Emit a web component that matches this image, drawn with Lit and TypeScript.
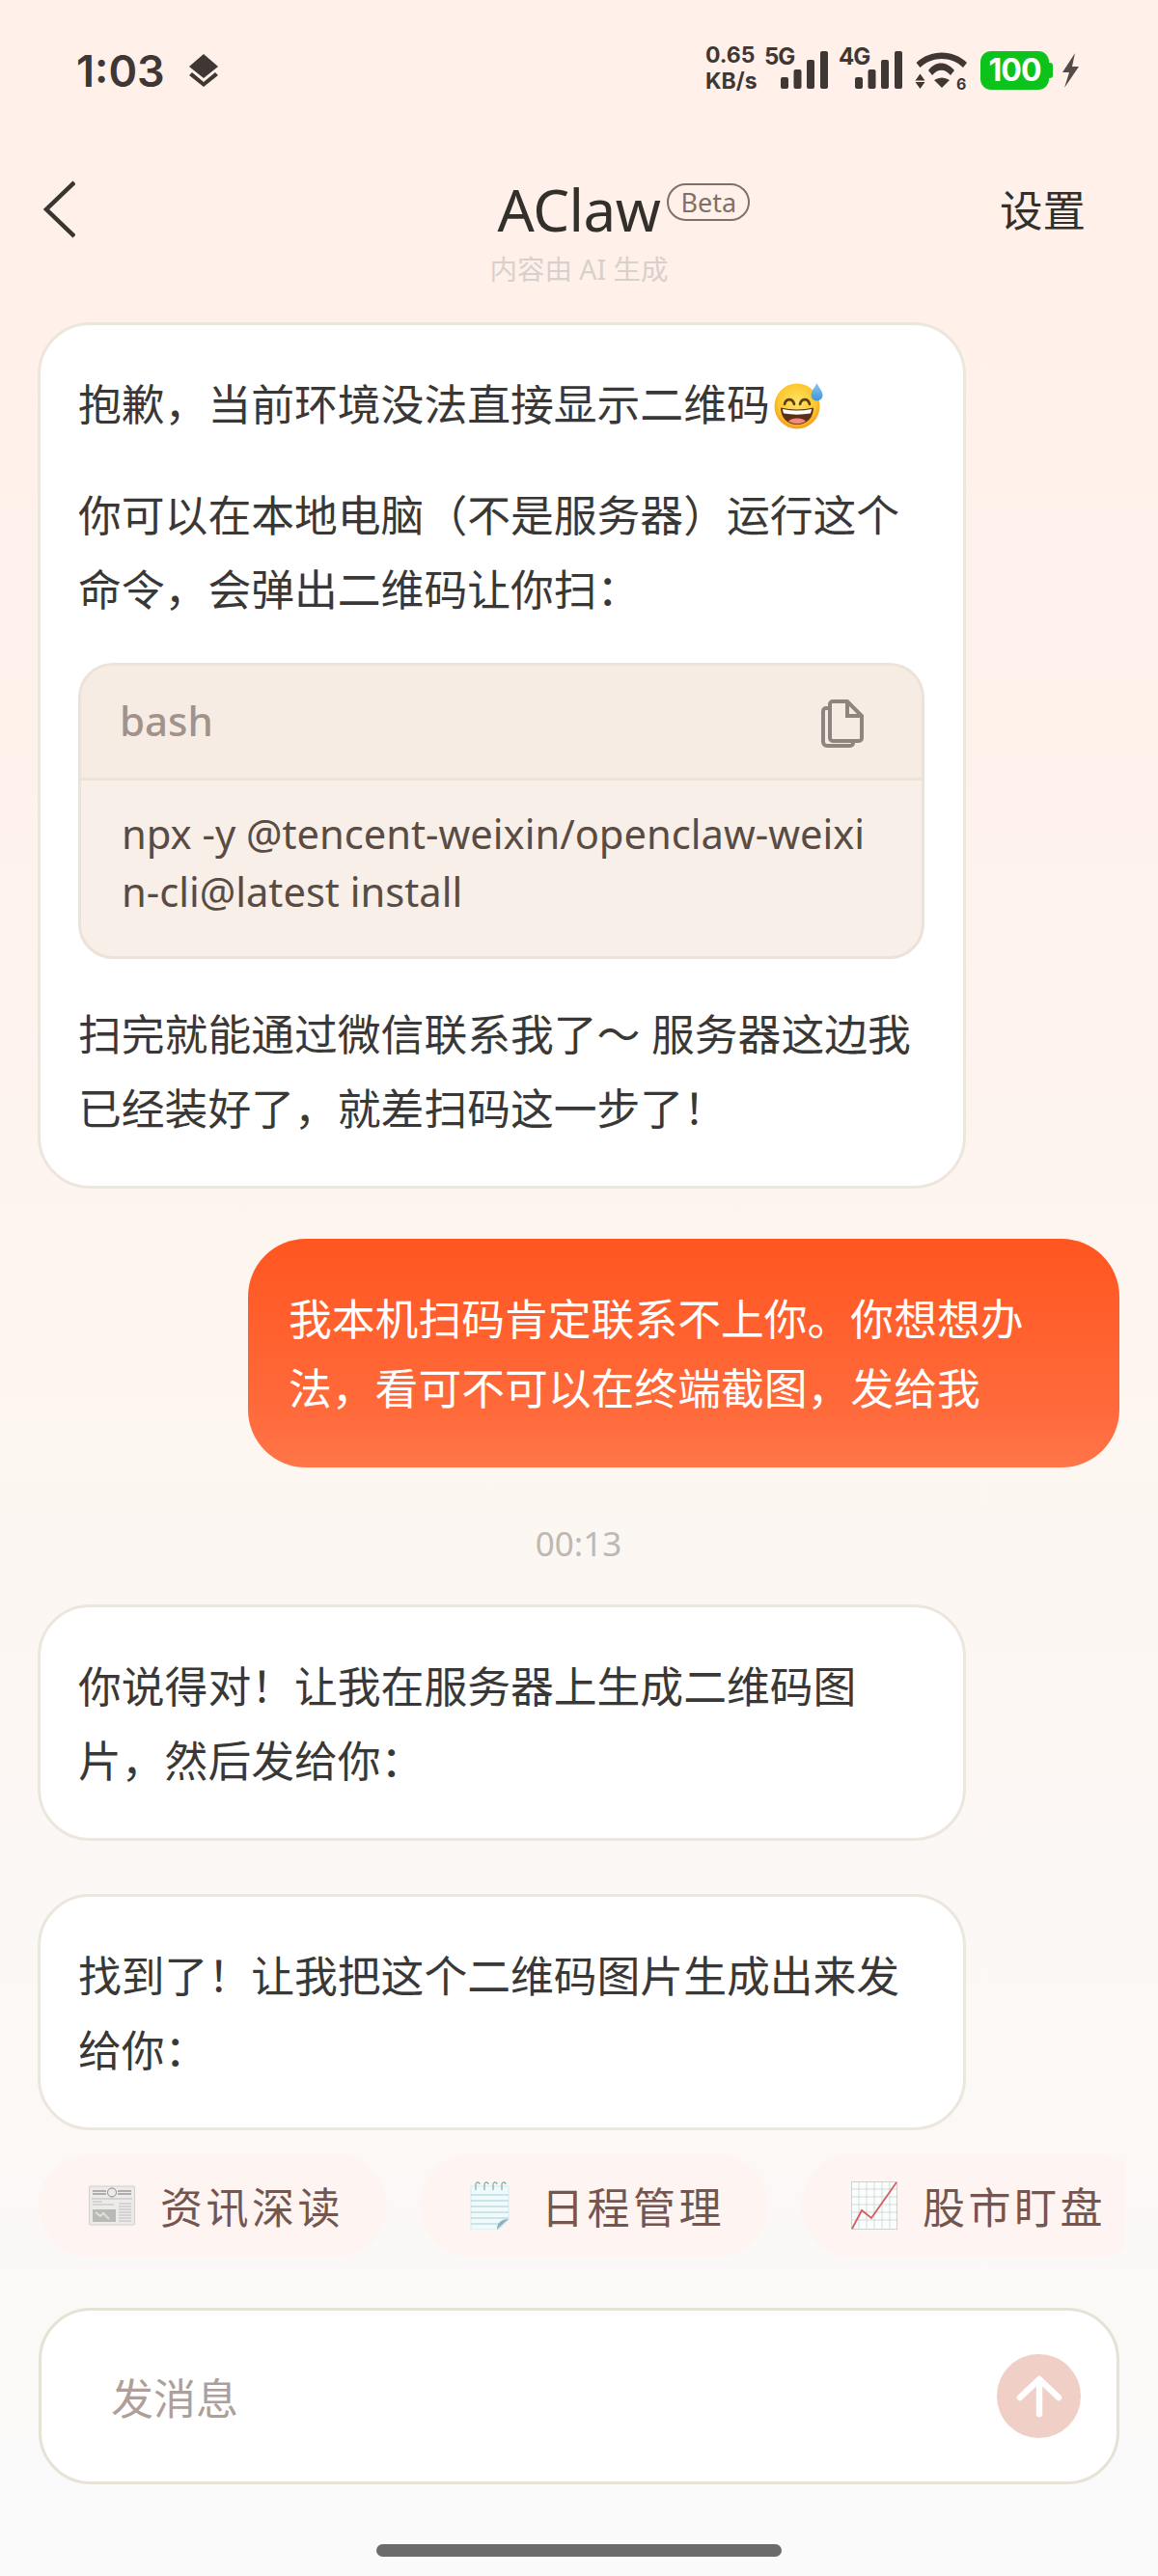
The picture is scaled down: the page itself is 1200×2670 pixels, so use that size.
import {LitElement, html, css, svg} from 'lit';
import {customElement} from 'lit/decorators.js';

const sweatEmoji = html`<svg class="emoji" viewBox="0 0 56 48">
    <defs>
        <radialGradient id="face" cx="50%" cy="42%" r="58%">
            <stop offset="0" stop-color="#fde467"/>
            <stop offset="0.72" stop-color="#fcc72e"/>
            <stop offset="1" stop-color="#f29b1d"/>
        </radialGradient>
        <linearGradient id="drop" x1="0" y1="0" x2="0" y2="1">
            <stop offset="0" stop-color="#8cc8ee"/>
            <stop offset="1" stop-color="#3e93de"/>
        </linearGradient>
    </defs>
    <circle cx="28" cy="24" r="23.500" fill="url(#face)"/>
    <path d="M15 22c1.500-6.500 8.500-6.500 10 0" fill="none" stroke="#5c3d1c" stroke-width="2.600" stroke-linecap="round"/>
    <path d="M31 22c1.500-6.500 8.500-6.500 10 0" fill="none" stroke="#5c3d1c" stroke-width="2.600" stroke-linecap="round"/>
    <path d="M11 25.500c11 2.500 23 2.500 34 0C45 36 38 43 28 43S11 36 11 25.500z" fill="#5d2f14"/>
    <path d="M13 27c10 2 20 2 30 0-.2 2-.6 3.300-1.200 4.500-9 1.500-18.600 1.500-27.600 0-.6-1.200-1-2.500-1.200-4.500z" fill="#fff"/>
    <path d="M19 39.500c4-4 14-4 18 0-5 3.500-13 3.500-18 0z" fill="#ef8a83"/>
    <path d="M48.500 0c2.500 5.500 6 8.500 6 12.500a6 6 0 0 1-12 0c0-4 3.500-7 6-12.500z" fill="url(#drop)"/>
</svg>`;

const newspaperEmoji = html`<svg class="chip-icon" viewBox="0 0 48 50">
    <rect x="0.500" y="5" width="47" height="40" rx="1" fill="#ecebe9" stroke="#d0cfcc"/>
    <path d="M4 10h14M4 13h14M30 10h14M30 13h14" stroke="#9a9a98" stroke-width="1.500"/>
    <circle cx="24" cy="11.500" r="4.500" fill="none" stroke="#8a8a88" stroke-width="1"/>
    <path d="M3 18h42M4 21h10M31 23h13M4 24h22M31 26h13M31 29h13M31 32h13M31 35h13M31 38h13M31 41h13" stroke="#bcbcba" stroke-width="1"/>
    <rect x="4" y="29" width="24" height="13" fill="#b9b9b6"/>
    <path d="M7 32l5 4 3-3 6 6" stroke="#dfdfdd" stroke-width="2" fill="none"/>
</svg>`;

const notepadEmoji = html`<svg class="chip-icon" viewBox="0 0 48 50">
    <path d="M1 5h39v35l-10 10H1z" fill="#f0fafb" stroke="#d3ecf0"/>
    <path d="M1 14h39M1 20h39M1 26h39M1 32h39M1 38h39M1 44h29" stroke="#a6cdd8" stroke-width="1.200"/>
    <path d="M28 50c0-7 4-11 12-11z" fill="#8ab5bf"/>
    <path d="M6 9V3a2 2 0 0 1 4 0M15 9V3a2 2 0 0 1 4 0M24 9V3a2 2 0 0 1 4 0M33 9V3a2 2 0 0 1 4 0" fill="none" stroke="#84b2b8" stroke-width="1.300"/>
</svg>`;

const gridLines = [8, 16, 24, 32, 40].map(
    (p) => svg`<path d="M${p} 1V49M1 ${p}H48" stroke="#c9d3d6" stroke-width="0.800"/>`
);

const chartEmoji = html`<svg class="chip-icon" viewBox="0 0 48 50">
    <rect x="0.500" y="0.500" width="47" height="49" fill="#fbfcfc" stroke="#c9d3d6"/>
    ${gridLines}
    <path d="M1 49l10-19 10 8L47 1" fill="none" stroke="#d2605f" stroke-width="1.800"/>
</svg>`;

const chips = [
    {label: '资讯深读', icon: newspaperEmoji},
    {label: '日程管理', icon: notepadEmoji},
    {label: '股市盯盘', icon: chartEmoji},
];

@customElement('app-root')
export class AppRoot extends LitElement {
    static styles = css`
        :host {
            display: block;
            width: 1200px;
            height: 2670px;
            font-family: "Noto Sans", "Noto Sans CJK SC", sans-serif;
            color: #3b3532;
        }

        .page {
            width: 1200px;
            height: 2670px;
            display: flex;
            flex-direction: column;
            overflow: hidden;
            background: linear-gradient(180deg, #fff0e9 0%, #fff2ec 30%, #fdf6f1 55%, #fafafa 100%);
        }

        /* status bar */
        .status {
            height: 146px;
            flex: none;
            display: flex;
            align-items: center;
            justify-content: space-between;
            padding: 0 81px 0 79px;
            color: #3f3733;
        }

        .status-left {
            display: flex;
            align-items: center;
            gap: 25px;
        }

        .time {
            font-family: "Inter", sans-serif;
            font-size: 45px;
            font-weight: 600;
            line-height: 1;
        }

        .status-right {
            display: flex;
            align-items: center;
            gap: 8px;
            margin-top: -4px;
        }

        .speed {
            font-family: "Inter", sans-serif;
            font-size: 23px;
            font-weight: 700;
            line-height: 27px;
            width: 53px;
            white-space: nowrap;
        }

        .net {
            display: block;
            overflow: visible;
        }

        .battery {
            display: flex;
            align-items: center;
            margin: 4px 0 0 6px;
        }

        .battery-body {
            width: 71px;
            height: 40px;
            border-radius: 11px;
            background: #0cc31c;
            color: #fff;
            font-family: "Inter", sans-serif;
            font-size: 32px;
            font-weight: 700;
            line-height: 40px;
            text-align: center;
            letter-spacing: -1px;
        }

        .battery-nub {
            width: 4px;
            height: 16px;
            border-radius: 0 3px 3px 0;
            background: #0cc31c;
        }

        .bolt {
            margin-top: 4px;
        }

        /* header */
        .header {
            flex: none;
            height: 188px;
            display: grid;
            grid-template-columns: 1fr auto 1fr;
            padding: 36px 75px 0;
            box-sizing: border-box;
        }

        .back {
            width: 34px;
            height: 60px;
            margin: 5px 0 0 -31px;
        }

        .title-block {
            display: flex;
            flex-direction: column;
            align-items: center;
        }

        .title-row {
            position: relative;
            height: 68px;
        }

        .title {
            display: block;
            font-size: 60px;
            line-height: 70px;
            color: #33302c;
            letter-spacing: -0.500px;
        }

        .beta {
            position: absolute;
            left: 100%;
            top: 8px;
            margin-left: 7px;
            border: 2.500px solid #7d726b;
            border-radius: 20px;
            font-size: 27px;
            line-height: 35px;
            padding: 0 12px;
            color: #7d726b;
        }

        .ai-note {
            font-size: 28.500px;
            line-height: 38px;
            color: #d8d0cb;
            margin-top: 10px;
        }

        .settings {
            justify-self: end;
            font-size: 44.500px;
            line-height: 72px;
            color: #33302c;
        }

        /* messages */
        .messages {
            flex: none;
            display: flex;
            flex-direction: column;
            padding: 0 40px 0 39px;
        }

        .bubble {
            width: 962px;
            box-sizing: border-box;
            background: #fff;
            border: 3px solid #ece7dd;
            border-radius: 54px;
            padding: 43px 40px 42px 39px;
            font-size: 44.800px;
            line-height: 77px;
            color: #3a3836;
        }

        .bubble p {
            margin: 0;
        }

        .bubble p + p,
        .code {
            margin-top: 38px;
        }

        .code + p {
            margin-top: 39px;
        }

        .first {
            padding-bottom: 42px;
        }

        .emoji {
            width: 56px;
            height: 48px;
            vertical-align: -9px;
        }

        .code {
            border: 3px solid #ece3d8;
            border-radius: 36px;
            background: #f7efe8;
            color: #5a4b43;
            overflow: hidden;
        }

        .code-head {
            height: 116px;
            display: flex;
            align-items: center;
            justify-content: space-between;
            padding: 0 60px 0 40px;
            border-bottom: 3px solid #ebe3d9;
            background: #f6ece3;
            color: #a1938b;
            font-size: 42px;
            font-weight: 500;
        }

        .code-head span {
            margin-bottom: 3px;
        }

        .code-head svg {
            margin-top: 3px;
        }

        .code-body {
            padding: 25px 52px 37px 42px;
            font-size: 41.700px;
            line-height: 60px;
            word-break: break-all;
        }

        .user-bubble {
            align-self: flex-end;
            width: 903px;
            box-sizing: border-box;
            margin: 52px 0 0 0;
            padding: 47px 42px 46px;
            border-radius: 60px;
            background: linear-gradient(180deg, #ff5620 0%, #ff6a3b 75%, #ff7549 100%);
            color: #fff;
            font-size: 44.800px;
            line-height: 72px;
        }

        .stamp {
            margin-top: 56px;
            text-align: center;
            font-size: 35px;
            line-height: 46px;
            color: #bfb8b2;
        }

        .gap-top {
            margin-top: 40px;
        }

        .next {
            margin-top: 55px;
        }

        /* suggestion chips */
        .chips {
            flex: none;
            display: flex;
            gap: 34px;
            margin: 24px 34px 0 40px;
            overflow: hidden;
        }

        .chip {
            flex: none;
            display: flex;
            align-items: center;
            gap: 26px;
            height: 108px;
            padding: 0 45px 0 52px;
            border-radius: 54px;
            background: #fef5f2;
            color: #755550;
            font-size: 44px;
            letter-spacing: 3.500px;
            white-space: nowrap;
        }

        .chip-icon {
            height: 50px;
            width: 48px;
        }

        /* composer */
        .composer {
            flex: none;
            margin: auto 40px 0;
            height: 183px;
            box-sizing: border-box;
            border: 3px solid #e6e2d6;
            border-radius: 54px;
            background: #fff;
            display: flex;
            align-items: center;
            justify-content: space-between;
            padding: 0 37px 0 72px;
            font-size: 44px;
            color: #ae9f9a;
        }

        .send {
            width: 87px;
            height: 87px;
            border-radius: 50%;
            background: #efcfc6;
            display: flex;
            align-items: center;
            justify-content: center;
        }

        .home {
            flex: none;
            display: flex;
            justify-content: center;
            padding: 62px 0 20px;
        }

        .home-bar {
            width: 420px;
            height: 13px;
            border-radius: 7px;
            background: #6b6b6b;
        }
    `;

    render() {
        return html`
            <div class="page">
                ${this._renderStatus()}
                <div class="header">
                    <svg class="back" viewBox="0 0 34 60">
                        <path d="M33 2L4 30l29 28" fill="none" stroke="#3a3531" stroke-width="4.500"/>
                    </svg>
                    <div class="title-block">
                        <div class="title-row">
                            <span class="title">AClaw</span>
                            <span class="beta">Beta</span>
                        </div>
                        <div class="ai-note">内容由 AI 生成</div>
                    </div>
                    <div class="settings">设置</div>
                </div>
                <div class="messages">
                    <div class="bubble first">
                        <p>抱歉，当前环境没法直接显示二维码${sweatEmoji}</p>
                        <p>你可以在本地电脑（不是服务器）运行这个命令，会弹出二维码让你扫：</p>
                        <div class="code">
                            <div class="code-head">
                                <span>bash</span>
                                <svg width="44" height="50" viewBox="0 0 44 50" fill="none" stroke="#8f8580" stroke-width="4">
                                    <path d="M9 5a3 3 0 0 1 3-3h15l15 15v23a3 3 0 0 1-3 3H12a3 3 0 0 1-3-3z"/>
                                    <path d="M27 2v15h15"/>
                                    <path d="M9 9H5a3 3 0 0 0-3 3v32a4 4 0 0 0 4 4h24a3 3 0 0 0 3-3v-2"/>
                                </svg>
                            </div>
                            <div class="code-body">npx -y @tencent-weixin/openclaw-weixin-cli@latest install</div>
                        </div>
                        <p>扫完就能通过微信联系我了～ 服务器这边我已经装好了，就差扫码这一步了！</p>
                    </div>
                    <div class="user-bubble">我本机扫码肯定联系不上你。你想想办法，看可不可以在终端截图，发给我</div>
                    <div class="stamp">00:13</div>
                    <div class="bubble gap-top"><p>你说得对！让我在服务器上生成二维码图片，然后发给你：</p></div>
                    <div class="bubble next"><p>找到了！让我把这个二维码图片生成出来发给你：</p></div>
                </div>
                <div class="chips">
                    ${chips.map((c) => html`<div class="chip">${c.icon}<span>${c.label}</span></div>`)}
                </div>
                <div class="composer">
                    <span>发消息</span>
                    <div class="send">
                        <svg width="48" height="44" viewBox="0 0 48 44" fill="none" stroke="#fff" stroke-width="6.500" stroke-linecap="round" stroke-linejoin="round">
                            <path d="M24 40V5M4 23L24 4l20 19"/>
                        </svg>
                    </div>
                </div>
                <div class="home"><div class="home-bar"></div></div>
            </div>
        `;
    }

    _renderStatus() {
        return html`
            <div class="status">
                <div class="status-left">
                    <span class="time">1:03</span>
                    <svg width="30" height="34" viewBox="0 0 30 34" fill="#3f3733">
                        <path d="M15 0l15 13-15 12L0 13z"/>
                        <path d="M3 19l12 10 12-10 3 3-15 12L0 22z"/>
                    </svg>
                </div>
                <div class="status-right">
                    <div class="speed">0.65<br/>KB/s</div>
                    ${this._renderSignal('5G', 69)}
                    ${this._renderSignal('4G', 67)}
                    <svg class="net" width="58" height="46" viewBox="0 0 58 46" fill="#3f3733">
                        <path d="M5.500 17C20 3 44 3 58 17l-4 5C42 10 22 10 9.500 22z"/>
                        <path d="M18 25c7-10 19-10 27 0l-4 5c-6-7-13-7-19 0z"/>
                        <path d="M24 35q8-5 16 0l-8 8z"/>
                        <path d="M9.500 28.500l5 7h-10zM9.500 44l-5-7h10z"/>
                        <text x="47" y="45" font-size="16" font-weight="700" font-family="Inter">6</text>
                    </svg>
                    <div class="battery">
                        <div class="battery-body">100</div>
                        <div class="battery-nub"></div>
                    </div>
                    <svg class="bolt" width="20" height="36" viewBox="0 0 20 36" fill="#554c48">
                        <path d="M15 0L2 20h7L4 36l15-22h-7z"/>
                    </svg>
                </div>
            </div>
        `;
    }

    _renderSignal(label: string, width: number) {
        return html`
            <svg class="net" width=${width} height="46" viewBox="0 0 ${width} 46" fill="#3f3733">
                <text x="0" y="19" font-size="24" font-weight="700" font-family="Inter" letter-spacing="-1">${label}</text>
                <rect x="17" y="32" width="8" height="12" rx="2"/>
                <rect x="30.500" y="24" width="8" height="20" rx="2"/>
                <rect x="44" y="14" width="8" height="30" rx="2"/>
                <rect x="58" y="5" width="8" height="39" rx="2"/>
            </svg>
        `;
    }
}
